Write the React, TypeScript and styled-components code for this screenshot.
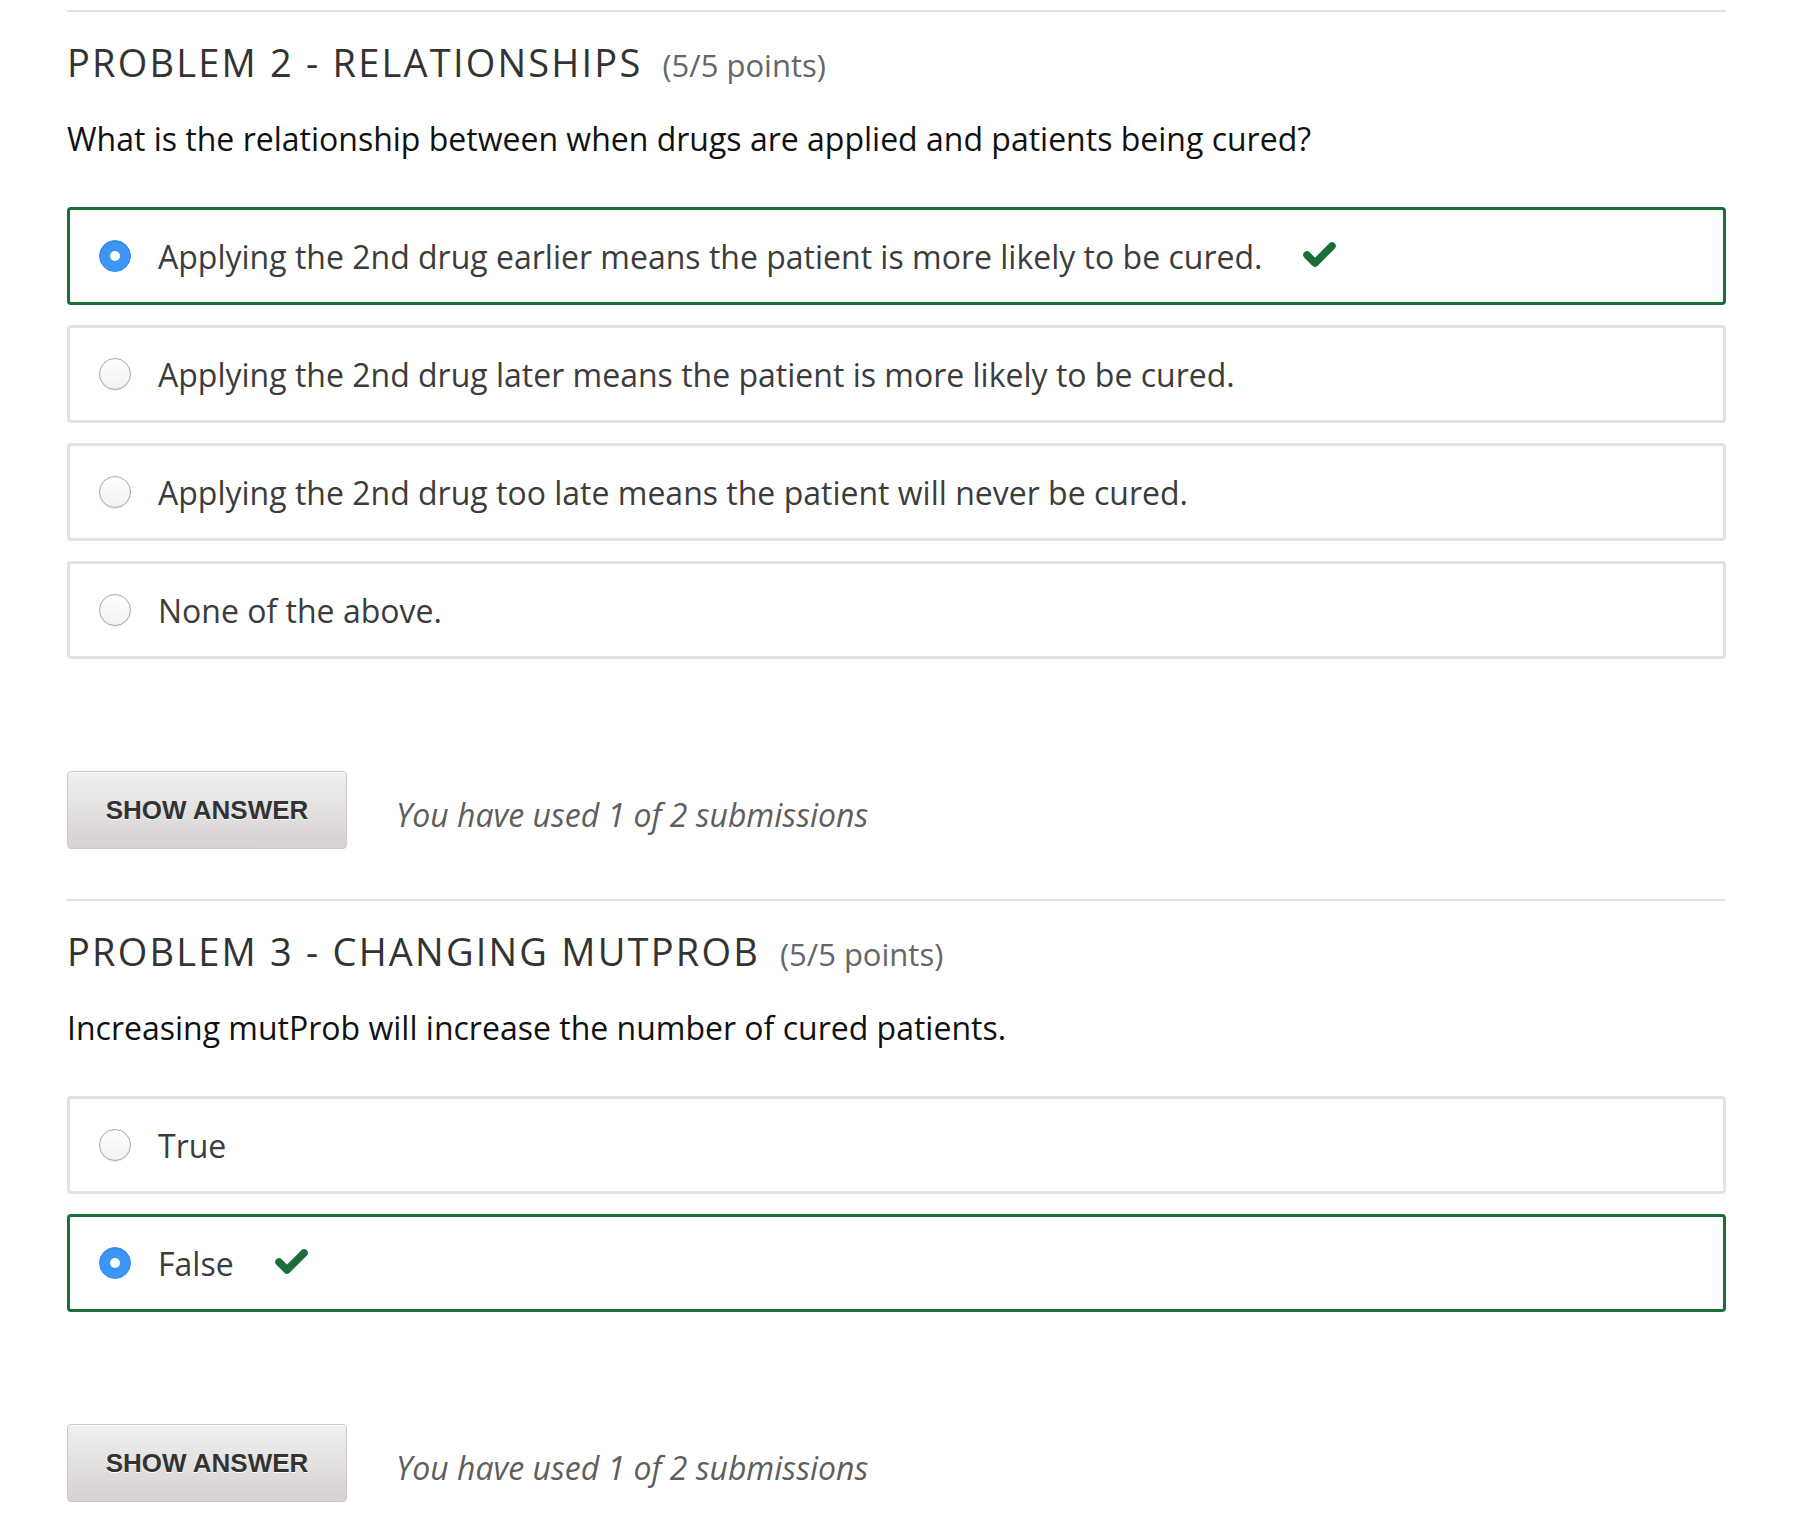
import React from 'react';
import styled, { createGlobalStyle } from 'styled-components';

const GlobalStyle = createGlobalStyle`
  html, body {
    margin: 0;
    padding: 0;
    background: #ffffff;
  }
  body {
    font-family: "Open Sans", "Liberation Sans", sans-serif;
    color: #3c3c3c;
  }
`;

const Page = styled.div`
  padding: 10px 69px 0 67px;
`;

const Problem = styled.section`
  border-top: 2px solid #e1e1e1;
  padding-bottom: 50px;
`;

const Header = styled.h3`
  margin: 26px 0 0;
  display: flex;
  align-items: baseline;
  gap: 20px;
  line-height: 48px;
  font-weight: 400;
`;

const Title = styled.span`
  font-size: 38px;
  letter-spacing: 2.2px;
  text-transform: uppercase;
  color: #333333;
`;

const Points = styled.span`
  font-size: 31px;
  color: #666666;
`;

const Question = styled.p`
  margin: 28px 0 0;
  font-size: 32px;
  line-height: 44px;
  color: #111111;
`;

const Choices = styled.div`
  margin-top: 46px;
  display: flex;
  flex-direction: column;
  gap: 20px;
`;

const Choice = styled.label<{ $correct: boolean }>`
  box-sizing: border-box;
  height: 98px;
  display: flex;
  align-items: center;
  padding-left: 29px;
  border: 3px solid ${p => (p.$correct ? '#1b6e38' : '#e3e3e3')};
  border-radius: 4px;
  font-size: 32px;
  color: #3c3c3c;
`;

const Radio = styled.span<{ $checked: boolean }>`
  box-sizing: border-box;
  flex: none;
  width: 32px;
  height: 32px;
  border-radius: 50%;
  margin-right: 27px;
  display: flex;
  align-items: center;
  justify-content: center;
  background: ${p => (p.$checked ? '#3b96f6' : 'linear-gradient(#ffffff, #f1f1f1)')};
  border: ${p => (p.$checked ? '1px solid #3b90ee' : '1px solid #a9a9a9')};
  box-shadow: ${p => (p.$checked ? 'inset 0 1px 1px rgba(0,0,0,0.12)' : '0 1px 1px rgba(0,0,0,0.08)')};

  &::after {
    content: '';
    display: ${p => (p.$checked ? 'block' : 'none')};
    width: 10px;
    height: 10px;
    border-radius: 50%;
    background: #ffffff;
  }
`;

const Check = styled.svg`
  flex: none;
  margin-left: 40px;
  margin-top: -4px;
`;

const Actions = styled.div`
  margin-top: 112px;
  display: flex;
  align-items: center;
  gap: 49px;
`;

const ShowButton = styled.button`
  box-sizing: border-box;
  width: 280px;
  height: 78px;
  border: 1px solid #cec7c7;
  border-radius: 4px;
  background: linear-gradient(#f0f0f0, #d7d1d1);
  box-shadow: inset 0 1px 0 rgba(255, 255, 255, 0.8);
  font-family: "Liberation Sans", Arial, sans-serif;
  font-weight: 700;
  font-size: 26px;
  color: #333333;
  text-shadow: 0 1px 0 #ffffff;
  padding: 0;
  cursor: pointer;
`;

const Attempts = styled.span`
  font-size: 32px;
  font-style: italic;
  color: #5e5e5e;
  margin-top: 8px;
`;

const CheckMark = () => (
  <Check width="35" height="27" viewBox="0 0 35 27">
    <polyline
      points="5,14 13,22 30,5"
      fill="none"
      stroke="#1b6e38"
      strokeWidth="7.5"
      strokeLinecap="round"
      strokeLinejoin="round"
    />
  </Check>
);

interface Option {
  text: string;
  checked?: boolean;
}

interface ProblemData {
  title: string;
  question: string;
  options: Option[];
}

const problems: ProblemData[] = [
  {
    title: 'Problem 2 - Relationships',
    question: 'What is the relationship between when drugs are applied and patients being cured?',
    options: [
      { text: 'Applying the 2nd drug earlier means the patient is more likely to be cured.', checked: true },
      { text: 'Applying the 2nd drug later means the patient is more likely to be cured.' },
      { text: 'Applying the 2nd drug too late means the patient will never be cured.' },
      { text: 'None of the above.' },
    ],
  },
  {
    title: 'Problem 3 - Changing mutProb',
    question: 'Increasing mutProb will increase the number of cured patients.',
    options: [{ text: 'True' }, { text: 'False', checked: true }],
  },
];

export default function App() {
  return (
    <>
      <GlobalStyle />
      <Page>
        {problems.map(problem => (
          <Problem key={problem.title}>
            <Header>
              <Title>{problem.title}</Title>
              <Points>(5/5 points)</Points>
            </Header>
            <Question>{problem.question}</Question>
            <Choices>
              {problem.options.map(option => (
                <Choice key={option.text} $correct={!!option.checked}>
                  <Radio $checked={!!option.checked} />
                  <span>{option.text}</span>
                  {option.checked && <CheckMark />}
                </Choice>
              ))}
            </Choices>
            <Actions>
              <ShowButton>SHOW ANSWER</ShowButton>
              <Attempts>You have used 1 of 2 submissions</Attempts>
            </Actions>
          </Problem>
        ))}
      </Page>
    </>
  );
}
